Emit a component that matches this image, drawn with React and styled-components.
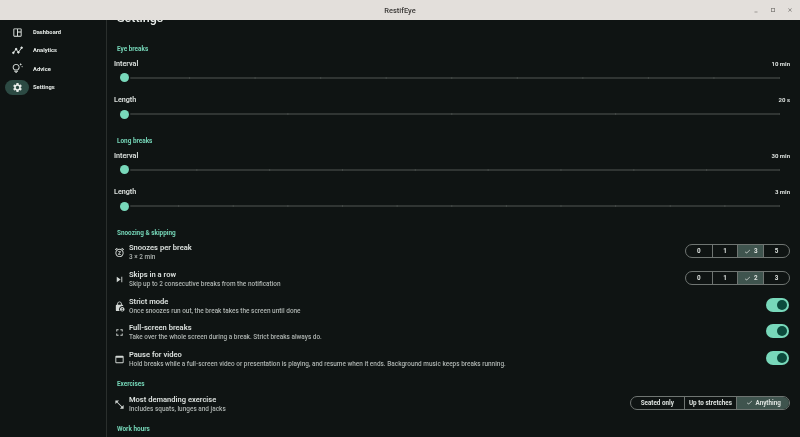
import React from 'react';
import styled, { createGlobalStyle } from 'styled-components';
import {
  MdOutlineSpaceDashboard, MdOutlineTipsAndUpdates, MdSettings,
  MdSnooze, MdSkipNext, MdLockPerson, MdFullscreen,
  MdOutlineWebAsset, MdOpenInFull, MdCheck, MdMinimize, MdCropSquare, MdClose,
} from 'react-icons/md';

const GlobalStyle = createGlobalStyle`
  html, body { margin: 0; padding: 0; background: #0f1413; }
  body { font-family: Roboto, "Liberation Sans", sans-serif; overflow: hidden; }
`;

const TRACK_SPAN = 655.5;

const AnalyticsIcon = () => (
  <svg viewBox="0 0 24 24" fill="none" stroke="currentColor" strokeWidth="2">
    <path d="M3 17 9 9l5 7 7-10" />
    <circle cx="3" cy="17" r="1.8" fill="currentColor" />
    <circle cx="9" cy="9" r="1.8" fill="currentColor" />
    <circle cx="14" cy="16" r="1.8" fill="currentColor" />
    <circle cx="21" cy="6" r="1.8" fill="currentColor" />
  </svg>
);

const NAV = [
  { label: 'Dashboard', Icon: MdOutlineSpaceDashboard },
  { label: 'Analytics', Icon: AnalyticsIcon },
  { label: 'Advice', Icon: MdOutlineTipsAndUpdates },
  { label: 'Settings', Icon: MdSettings, active: true },
];

const Slider = ({ label, value, steps }) => (
  <SliderBlock>
    <SliderHead><span>{label}</span><SliderValue>{value}</SliderValue></SliderHead>
    <SliderRow>
      <Thumb />
      <Track $period={TRACK_SPAN / steps} />
    </SliderRow>
  </SliderBlock>
);

const Segments = ({ options, selected, wide }) => (
  <SegmentGroup>
    {options.map(option => (
      <Segment key={option} $wide={wide} $selected={option === selected}>
        {option === selected && <MdCheck />}
        {option}
      </Segment>
    ))}
  </SegmentGroup>
);

const Row = ({ Icon, title, sub, flip, children }) => (
  <SettingRow>
    <RowIcon $flip={flip}><Icon /></RowIcon>
    <RowText>
      <RowTitle>{title}</RowTitle>
      <RowSub>{sub}</RowSub>
    </RowText>
    {children}
  </SettingRow>
);

const App = () => (
  <>
    <GlobalStyle />
    <Window>
      <TitleBar>
        <span>RestifEye</span>
        <WindowButtons>
          <MdMinimize /><MdCropSquare /><MdClose />
        </WindowButtons>
      </TitleBar>
      <Body>
        <Sidebar>
          {NAV.map(({ label, Icon, active }) => (
            <NavItem key={label}>
              <NavPill $active={active}><Icon /></NavPill>
              <NavLabel>{label}</NavLabel>
            </NavItem>
          ))}
        </Sidebar>
        <Main>
          <Content>
            <PageTitle>Settings</PageTitle>
            <SectionLabel $top={13}>Eye breaks</SectionLabel>
            <Slider label="Interval" value="10 min" steps={10} />
            <Slider label="Length" value="20 s" steps={4} />
            <SectionLabel $top={8.6}>Long breaks</SectionLabel>
            <Slider label="Interval" value="30 min" steps={9} />
            <Slider label="Length" value="3 min" steps={12} />
            <SectionLabel $top={8.6}>Snoozing &amp; skipping</SectionLabel>
            <Rows>
              <Row Icon={MdSnooze} title="Snoozes per break" sub="3 × 2 min">
                <Segments options={['0', '1', '3', '5']} selected="3" />
              </Row>
              <Row Icon={MdSkipNext} title="Skips in a row" sub="Skip up to 2 consecutive breaks from the notification">
                <Segments options={['0', '1', '2', '3']} selected="2" />
              </Row>
              <Row Icon={MdLockPerson} title="Strict mode" sub="Once snoozes run out, the break takes the screen until done">
                <Toggle />
              </Row>
              <Row Icon={MdFullscreen} title="Full-screen breaks" sub="Take over the whole screen during a break. Strict breaks always do.">
                <Toggle />
              </Row>
              <Row Icon={MdOutlineWebAsset} title="Pause for video" sub="Hold breaks while a full-screen video or presentation is playing, and resume when it ends. Background music keeps breaks running.">
                <Toggle />
              </Row>
            </Rows>
            <SectionLabel $top={10}>Exercises</SectionLabel>
            <Rows>
              <Row Icon={MdOpenInFull} flip title="Most demanding exercise" sub="Includes squats, lunges and jacks">
                <Segments wide options={['Seated only', 'Up to stretches', 'Anything']} selected="Anything" />
              </Row>
            </Rows>
            <SectionLabel $top={10}>Work hours</SectionLabel>
          </Content>
        </Main>
      </Body>
    </Window>
  </>
);

export default App;

const Window = styled.div`
  width: 800px;
  height: 437px;
  display: flex;
  flex-direction: column;
  overflow: hidden;
  background: #0f1413;
  filter: blur(0.4px);
`;

const TitleBar = styled.header`
  height: 20px;
  flex: none;
  position: relative;
  display: flex;
  align-items: center;
  justify-content: center;
  background: #e3dfdb;
  color: #3a3836;
  font-size: 7.5px;
  font-weight: 500;
`;

const WindowButtons = styled.div`
  position: absolute;
  right: 7px;
  top: 7px;
  display: flex;
  gap: 11px;
  color: #55524f;
  svg { width: 6px; height: 6px; }
`;

const Body = styled.div`
  flex: 1;
  display: flex;
  min-height: 0;
`;

const Sidebar = styled.nav`
  width: 107px;
  flex: none;
  box-sizing: border-box;
  padding-top: 4px;
  border-right: 1px solid #2a2f2d;
  display: flex;
  flex-direction: column;
  gap: 2.4px;
`;

const NavItem = styled.div`
  height: 16px;
  display: flex;
  align-items: center;
  padding-left: 5px;
`;

const NavPill = styled.div`
  width: 24px;
  height: 15px;
  display: flex;
  align-items: center;
  justify-content: center;
  border-radius: 8px;
  color: #e6ebe8;
  background: ${props => props.$active ? '#2c4a43' : 'transparent'};
  svg { width: 11px; height: 11px; }
`;

const NavLabel = styled.span`
  margin-left: 4px;
  color: #e6ebe8;
  font-size: 5.8px;
  font-weight: 700;
`;

const Main = styled.main`
  flex: 1;
  min-width: 0;
  overflow: hidden;
`;

const Content = styled.div`
  margin-top: -16px;
  padding: 0 10px 0 7px;
`;

const PageTitle = styled.h1`
  margin: 0 0 0 3px;
  height: 27px;
  line-height: 27px;
  color: #e6ebe8;
  font-size: 12.5px;
  font-weight: 500;
`;

const SectionLabel = styled.h2`
  margin: ${props => props.$top ?? 8}px 0 0 3px;
  height: 10px;
  line-height: 10px;
  color: #74d4b6;
  font-size: 6.4px;
  font-weight: 700;
`;

const SliderBlock = styled.div`
  margin-top: 4.7px;
  height: 32px;
`;

const SliderHead = styled.div`
  height: 10px;
  line-height: 10px;
  display: flex;
  justify-content: space-between;
  color: #dce1de;
  font-size: 7.2px;
  font-weight: 600;
`;

const SliderValue = styled.span`
  font-size: 6px;
  font-weight: 700;
`;

const SliderRow = styled.div`
  height: 9px;
  margin-top: 4.5px;
  padding-left: 6px;
  display: flex;
  align-items: center;
  gap: 1px;
`;

const Thumb = styled.div`
  width: 9px;
  height: 9px;
  flex: none;
  border-radius: 50%;
  background: #78d8ba;
`;

const Track = styled.div`
  width: 650px;
  height: 2px;
  border-radius: 1px;
  background-color: #303533;
  background-image: linear-gradient(90deg, transparent calc(100% - 1px), #434946 0);
  background-size: ${props => props.$period}px 100%;
  background-position-x: -5.5px;
`;

const Rows = styled.div`
  margin-top: 5px;
  display: flex;
  flex-direction: column;
  gap: 6.6px;
`;

const SettingRow = styled.div`
  height: 20px;
  display: flex;
  align-items: center;
`;

const RowIcon = styled.div`
  width: 15px;
  flex: none;
  display: flex;
  color: #d3d8d5;
  transform: ${props => props.$flip ? 'scaleX(-1)' : 'none'};
  transform-origin: 5.5px 50%;
  svg { width: 11px; height: 11px; }
`;

const RowText = styled.div`
  flex: 1;
  min-width: 0;
`;

const RowTitle = styled.div`
  color: #dce1de;
  font-size: 7.55px;
  font-weight: 600;
  line-height: 10px;
`;

const RowSub = styled.div`
  color: #adb3b0;
  font-size: 6.45px;
  font-weight: 500;
  line-height: 9px;
  white-space: nowrap;
`;

const SegmentGroup = styled.div`
  display: flex;
  height: 14px;
  margin-bottom: 3px;
  box-sizing: border-box;
  border: 1px solid #6f7572;
  border-radius: 7px;
  overflow: hidden;
`;

const Segment = styled.div`
  width: ${props => props.$wide ? '52.7px' : '25.8px'};
  box-sizing: border-box;
  display: flex;
  align-items: center;
  justify-content: center;
  gap: 3px;
  color: #dce1de;
  font-size: 6.3px;
  font-weight: 700;
  white-space: nowrap;
  background: ${props => props.$selected ? '#3f544e' : 'transparent'};
  & + & { border-left: 1px solid #6f7572; }
  svg { width: 7px; height: 7px; flex: none; }
`;

const Toggle = styled.div`
  width: 23px;
  height: 14px;
  margin: 0 1px 3px 0;
  border-radius: 7px;
  background: #78d8ba;
  position: relative;
  &::after {
    content: '';
    position: absolute;
    right: 2px;
    top: 2px;
    width: 10px;
    height: 10px;
    border-radius: 50%;
    background: #0c4a3c;
  }
`;
